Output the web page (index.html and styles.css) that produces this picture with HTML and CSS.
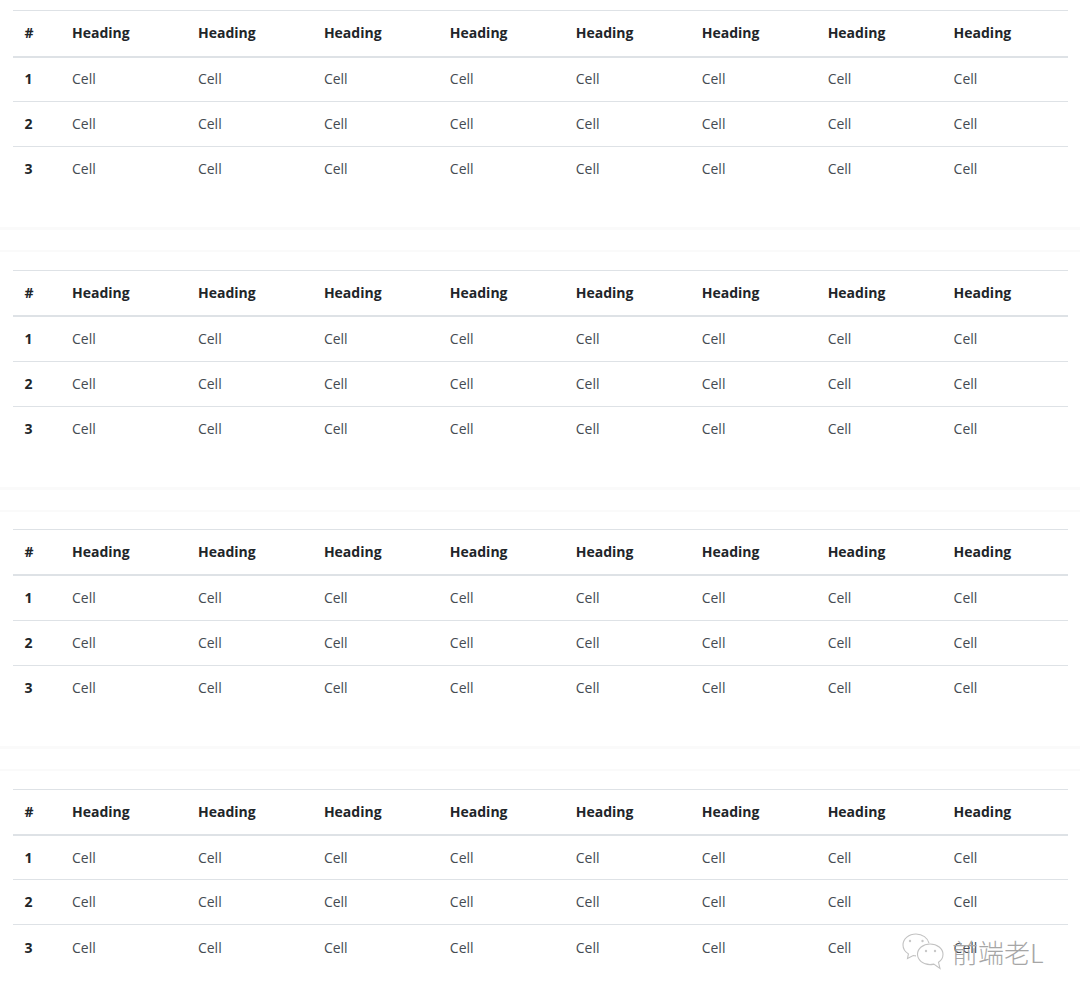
FILE: index.html
```html
<!DOCTYPE html>
<html lang="zh">
<head>
<meta charset="utf-8">
<title>Tables</title>
<link rel="stylesheet" href="styles.css">
</head>
<body>
<div class="page" id="page">
<section class="block">
<table class="tbl"><thead><tr><th>#</th><th>Heading</th><th>Heading</th><th>Heading</th><th>Heading</th><th>Heading</th><th>Heading</th><th>Heading</th><th>Heading</th></tr></thead>
<tbody>
<tr><th>1</th><td>Cell</td><td>Cell</td><td>Cell</td><td>Cell</td><td>Cell</td><td>Cell</td><td>Cell</td><td>Cell</td></tr>
<tr><th>2</th><td>Cell</td><td>Cell</td><td>Cell</td><td>Cell</td><td>Cell</td><td>Cell</td><td>Cell</td><td>Cell</td></tr>
<tr><th>3</th><td>Cell</td><td>Cell</td><td>Cell</td><td>Cell</td><td>Cell</td><td>Cell</td><td>Cell</td><td>Cell</td></tr>
</tbody></table>
</section>
<section class="block">
<table class="tbl"><thead><tr><th>#</th><th>Heading</th><th>Heading</th><th>Heading</th><th>Heading</th><th>Heading</th><th>Heading</th><th>Heading</th><th>Heading</th></tr></thead>
<tbody>
<tr><th>1</th><td>Cell</td><td>Cell</td><td>Cell</td><td>Cell</td><td>Cell</td><td>Cell</td><td>Cell</td><td>Cell</td></tr>
<tr><th>2</th><td>Cell</td><td>Cell</td><td>Cell</td><td>Cell</td><td>Cell</td><td>Cell</td><td>Cell</td><td>Cell</td></tr>
<tr><th>3</th><td>Cell</td><td>Cell</td><td>Cell</td><td>Cell</td><td>Cell</td><td>Cell</td><td>Cell</td><td>Cell</td></tr>
</tbody></table>
</section>
<section class="block">
<table class="tbl"><thead><tr><th>#</th><th>Heading</th><th>Heading</th><th>Heading</th><th>Heading</th><th>Heading</th><th>Heading</th><th>Heading</th><th>Heading</th></tr></thead>
<tbody>
<tr><th>1</th><td>Cell</td><td>Cell</td><td>Cell</td><td>Cell</td><td>Cell</td><td>Cell</td><td>Cell</td><td>Cell</td></tr>
<tr><th>2</th><td>Cell</td><td>Cell</td><td>Cell</td><td>Cell</td><td>Cell</td><td>Cell</td><td>Cell</td><td>Cell</td></tr>
<tr><th>3</th><td>Cell</td><td>Cell</td><td>Cell</td><td>Cell</td><td>Cell</td><td>Cell</td><td>Cell</td><td>Cell</td></tr>
</tbody></table>
</section>
<section class="block">
<table class="tbl"><thead><tr><th>#</th><th>Heading</th><th>Heading</th><th>Heading</th><th>Heading</th><th>Heading</th><th>Heading</th><th>Heading</th><th>Heading</th></tr></thead>
<tbody>
<tr><th>1</th><td>Cell</td><td>Cell</td><td>Cell</td><td>Cell</td><td>Cell</td><td>Cell</td><td>Cell</td><td>Cell</td></tr>
<tr><th>2</th><td>Cell</td><td>Cell</td><td>Cell</td><td>Cell</td><td>Cell</td><td>Cell</td><td>Cell</td><td>Cell</td></tr>
<tr><th>3</th><td>Cell</td><td>Cell</td><td>Cell</td><td>Cell</td><td>Cell</td><td>Cell</td><td>Cell</td><td>Cell</td></tr>
</tbody></table>
</section>
<div class="mark">
<svg class="mark-icon" width="42" height="37" viewBox="0 0 42 37" fill="none" stroke="#c2c2c2" stroke-width="1.1">
<path d="M14 1C7 1 1 5.800 1 12c0 3.700 2.100 6.800 5.400 8.900L5.500 25.500l5.700-3c.8.200 1.800.4 2.800.4"/>
<path d="M14 1c6.400 0 11.800 4 13 9.200"/>
<path d="M28 11c-7 0-12.500 4.600-12.500 10.300S21 31.600 28 31.600c1.400 0 2.600-.2 3.800-.5l6.200 4.400-1.500-6.200c3-1.900 4.500-4.700 4.500-8 0-5.700-5.700-10.300-13-10.300z" fill="#fff"/>
<circle cx="8" cy="8" r="1.200" fill="#c8c8c8" stroke="none"/>
<circle cx="20.500" cy="8" r="1.200" fill="#c8c8c8" stroke="none"/>
<circle cx="24" cy="18" r="1.200" fill="#c8c8c8" stroke="none"/>
<circle cx="33" cy="18" r="1.200" fill="#c8c8c8" stroke="none"/>
</svg>
<span class="mark-text">前端老L</span>
</div>
</div>
</body>
</html>
```
FILE: styles.css
```css
* { box-sizing: border-box; }
html, body { margin: 0; padding: 0; background: #fff; }
.page {
  position: relative;
  width: 1080px;
  height: 1000px;
  overflow: hidden;
  padding-top: 10.200px;
  font-family: "Open Sans", "Liberation Sans", sans-serif;
  font-size: 14px;
  color: #212529;
}
.block {
  height: 259.450px;
  padding: 0 12px 0 13px;
  position: relative;
}
.block:not(:last-of-type)::after {
  content: "";
  position: absolute;
  left: 0;
  right: 0;
  top: 217px;
  height: 20px;
  border-top: 3px solid #fafafa;
  border-bottom: 2px solid #fafafa;
}
.tbl {
  width: 1055px;
  border-collapse: collapse;
  table-layout: fixed;
}
.tbl th, .tbl td {
  height: 45px;
  padding: 0 11.500px;
  text-align: left;
  vertical-align: middle;
  border-top: 1px solid #dee2e6;
  font-size: 14px;
  line-height: 20px;
}
.tbl th { font-weight: 700; }
.tbl td { color: #444b52; }
.tbl thead th { border-bottom: 2px solid #dee2e6; height: 45.900px; }
.tbl tr > :first-child { width: 47.500px; }
.mark {
  position: absolute;
  left: 902px;
  top: 933px;
  display: flex;
  align-items: center;
  gap: 8px;
}
.mark-text {
  font-family: "Noto Sans CJK SC", "Noto Sans", sans-serif;
  font-size: 26px;
  line-height: 36px;
  font-weight: 300;
  color: #a6a6a6;
  white-space: nowrap;
}
```
